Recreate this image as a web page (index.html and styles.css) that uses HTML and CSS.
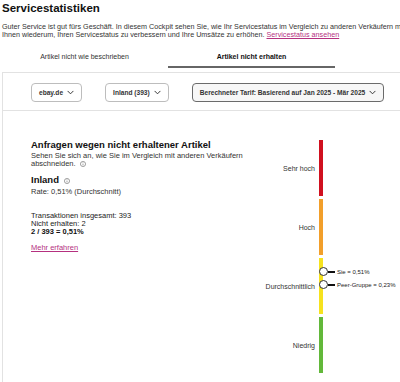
FILE: index.html
```html
<!DOCTYPE html>
<html lang="de">
<head>
  <meta charset="UTF-8" />
  <meta name="viewport" content="width=device-width, initial-scale=1.0"/>
  <title>Servicestatistiken</title>
  <link rel="stylesheet" href="styles.css">
</head>
<body>
  <div class="page">
    <h1 class="title">Servicestatistiken</h1>
    <p class="intro">
      Guter Service ist gut fürs Geschäft. In diesem Cockpit sehen Sie, wie Ihr Servicestatus im Vergleich zu anderen Verkäufern mit ähnlichem<br>
      Ihnen wiederum, Ihren Servicestatus zu verbessern und Ihre Umsätze zu erhöhen. <a href="#" class="link">Servicestatus ansehen</a>
    </p>

    <div class="tabs">
      <div class="tab">Artikel nicht wie beschrieben</div>
      <div class="tab active">Artikel nicht erhalten</div>
    </div>

    <div class="filters">
      <button class="select">ebay.de <svg class="chev" viewBox="0 0 8 5"><polyline points="0.7,0.7 4,4 7.3,0.7"/></svg></button>
      <button class="select">Inland (393) <svg class="chev" viewBox="0 0 8 5"><polyline points="0.7,0.7 4,4 7.3,0.7"/></svg></button>
      <button class="select selected">Berechneter Tarif: Basierend auf Jan 2025 - Mär 2025 <svg class="chev" viewBox="0 0 8 5"><polyline points="0.7,0.7 4,4 7.3,0.7"/></svg></button>
    </div>

    <div class="panel">
      <div class="details">
        <h2 class="headline">Anfragen wegen nicht erhaltener Artikel</h2>
        <p class="sub">Sehen Sie sich an, wie Sie im Vergleich mit anderen Verkäufern abschneiden. <svg class="info" viewBox="0 0 10 10"><circle cx="5" cy="5" r="4.3"/><line x1="5" y1="4.3" x2="5" y2="7.3"/><circle class="dot" cx="5" cy="2.8" r="0.6"/></svg></p>

        <h3 class="region">Inland <svg class="info" viewBox="0 0 10 10"><circle cx="5" cy="5" r="4.3"/><line x1="5" y1="4.3" x2="5" y2="7.3"/><circle class="dot" cx="5" cy="2.8" r="0.6"/></svg></h3>
        <p class="rate">Rate: 0,51% (Durchschnitt)</p>

        <div class="numbers">
          <div>Transaktionen insgesamt: 393</div>
          <div>Nicht erhalten: 2</div>
          <div class="calc">2 / 393 = 0,51%</div>
        </div>

        <a href="#" class="link more">Mehr erfahren</a>
      </div>

      <div class="chart">
        <div class="level">
          <span class="label">Sehr hoch</span>
          <span class="bar red"></span>
        </div>
        <div class="level">
          <span class="label">Hoch</span>
          <span class="bar orange"></span>
        </div>
        <div class="level">
          <span class="label">Durchschnittlich</span>
          <span class="bar yellow">
            <span class="marker you"><span class="ring"></span><span class="stick"></span>Sie = 0,51%</span>
            <span class="marker peer"><span class="ring"></span><span class="stick"></span>Peer-Gruppe = 0,23%</span>
          </span>
        </div>
        <div class="level">
          <span class="label">Niedrig</span>
          <span class="bar green"></span>
        </div>
      </div>
    </div>
  </div>
</body>
</html>
```

FILE: styles.css
```css
html, body {
  margin: 0;
  padding: 0;
  background: #fff;
  overflow: hidden;
}

body {
  font-family: 'Liberation Sans', Arial, sans-serif;
  color: #111;
  width: 400px;
  height: 382px;
}

.page {
  height: 382px;
  padding-left: 2px;
  display: flex;
  flex-direction: column;
  overflow: hidden;
}

.title {
  margin: 1px 0 0;
  font-size: 11.5px;
  line-height: 15px;
  font-weight: bold;
}

.intro {
  margin: 7px 0 0;
  font-size: 7.2px;
  line-height: 8px;
  color: #333;
  white-space: nowrap;
}

.link {
  color: #b5307f;
  text-decoration: underline;
}

/* tabs */
.tabs {
  display: flex;
  margin-left: -1px;
}

.tab {
  width: 167px;
  text-align: center;
  font-size: 7px;
  line-height: 8px;
  color: #333;
  padding: 14px 0 5px;
  border-bottom: 2px solid transparent;
}

.tab.active {
  font-weight: bold;
  color: #111;
  border-bottom-color: #666;
}

/* filter bar */
.filters {
  margin-top: 4px;
  border: 1px solid #e2e2e2;
  border-right: none;
  padding: 10px 0 8px 28px;
  display: flex;
  gap: 23px;
}

.select {
  flex: none;
  height: 19px;
  display: flex;
  align-items: center;
  gap: 4px;
  padding: 0 7px;
  white-space: nowrap;
  font-family: inherit;
  font-size: 6.6px;
  font-weight: bold;
  color: #333;
  background: #fff;
  border: 1px solid #bdbdbd;
  border-radius: 4px;
}

.select.selected {
  background: #f7f7f7;
  border-color: #6b6b6b;
}

.chev {
  width: 7px;
  height: 5px;
  fill: none;
  stroke: #333;
  stroke-width: 1.1;
}

/* panel */
.panel {
  flex: 1;
  display: flex;
  border-left: 1px solid #e2e2e2;
  padding: 28px 0 0 28px;
}

.details {
  width: 230px;
  flex: none;
}

.headline {
  margin: 0;
  font-size: 9.5px;
  line-height: 12px;
  font-weight: bold;
}

.sub {
  margin: 1px 0 0;
  font-size: 7.5px;
  line-height: 8px;
  color: #333;
}

.info {
  width: 6px;
  height: 6px;
  vertical-align: -0.5px;
  margin-left: 2px;
  fill: none;
  stroke: #666;
  stroke-width: 1;
}

.info .dot {
  fill: #666;
  stroke: none;
}

.region {
  margin: 6px 0 0;
  font-size: 9.5px;
  line-height: 12px;
  font-weight: bold;
}

.rate {
  margin: 2px 0 0;
  font-size: 7.5px;
  line-height: 8px;
  color: #333;
}

.numbers {
  margin-top: 16px;
  font-size: 7.5px;
  line-height: 8px;
  color: #222;
}

.calc {
  font-weight: bold;
  color: #111;
}

.more {
  display: inline-block;
  margin-top: 7px;
  font-size: 7.5px;
  line-height: 8px;
}

/* level chart */
.chart {
  margin-top: 1px;
  display: flex;
  flex-direction: column;
  gap: 3px;
}

.level {
  display: flex;
  align-items: center;
  height: 56px;
}

.label {
  width: 54px;
  text-align: right;
  font-size: 7px;
  color: #333;
  margin-right: 4px;
}

.bar {
  position: relative;
  width: 4px;
  height: 100%;
}

.red { background: #d0101f; }
.orange { background: #f29f2a; }
.yellow { background: #f6e21e; }
.green { background: #62b83a; }

.marker {
  position: absolute;
  left: 0;
  display: flex;
  align-items: center;
  white-space: nowrap;
  font-size: 6px;
  color: #222;
}

.marker.you { top: 9px; }
.marker.peer { top: 22px; }

.ring {
  width: 7px;
  height: 7px;
  border: 1px solid #333;
  border-radius: 50%;
  background: #fff;
}

.stick {
  width: 7px;
  height: 2px;
  background: #111;
  margin-right: 2px;
}
```
